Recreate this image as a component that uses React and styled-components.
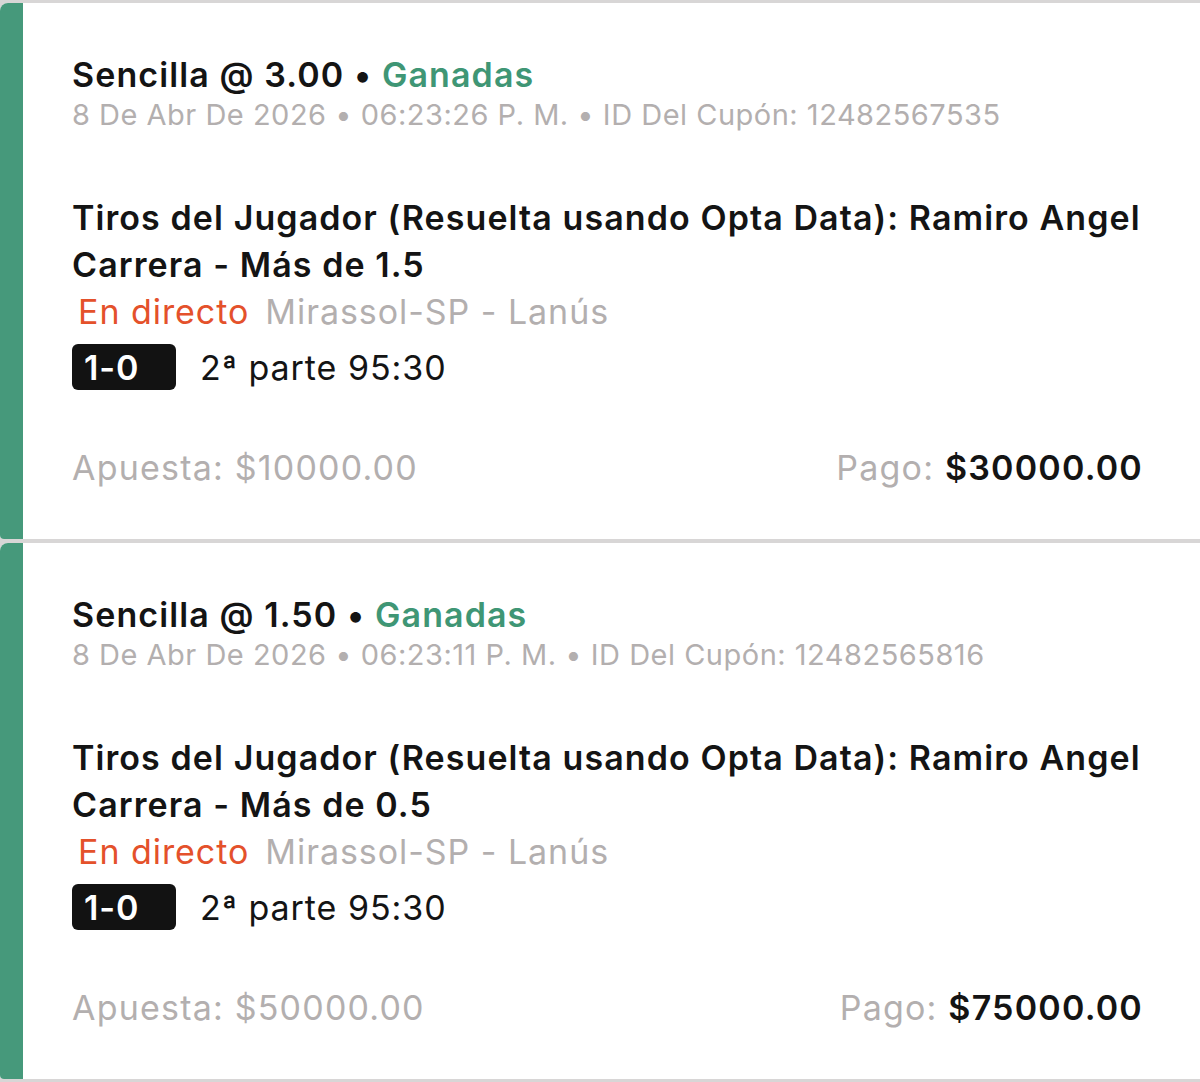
import React from 'react'
import styled, { createGlobalStyle } from 'styled-components'

const GlobalStyle = createGlobalStyle`
  html, body {
    margin: 0;
    padding: 0;
    background: #d8d6d6;
  }
  body {
    font-family: Inter, "Noto Sans", "Liberation Sans", sans-serif;
    -webkit-font-smoothing: antialiased;
  }
`

const Page = styled.div`
  display: flex;
  flex-direction: column;
  gap: 4px;
  padding: 3px 0;
  width: 1200px;
`

const Card = styled.div`
  display: flex;
  height: 536px;
  background: #ffffff;
  border-top-left-radius: 8px;
  border-bottom-left-radius: 4px;
  overflow: hidden;
`

const Bar = styled.div`
  width: 23px;
  flex: none;
  background: #46997b;
`

const Body = styled.div`
  flex: 1;
  display: flex;
  flex-direction: column;
  padding: 52px 59px 0 49px;
`

const Header = styled.div`
  font-size: 34px;
  line-height: 40px;
  font-weight: 600;
  color: #141414;
  letter-spacing: 1.1px;
  white-space: nowrap;
`

const Status = styled.span`
  color: #3f9675;
`

const Meta = styled.div`
  font-size: 29px;
  line-height: 40px;
  color: #b3afaf;
  letter-spacing: 0.5px;
  white-space: nowrap;
`

const Title = styled.div`
  margin: 59px -20px 0 0;
  font-size: 34px;
  line-height: 47px;
  font-weight: 600;
  color: #141414;
  letter-spacing: 1.08px;
`

const LiveRow = styled.div`
  display: flex;
  gap: 16px;
  padding-left: 6px;
  font-size: 34px;
  line-height: 47px;
  color: #b3afaf;
  letter-spacing: 0.95px;
`

const Live = styled.span`
  color: #e4512b;
`

const ScoreRow = styled.div`
  display: flex;
  align-items: center;
  gap: 24px;
  margin-top: 9px;
  font-size: 34px;
  color: #141414;
  letter-spacing: 0.95px;
`

const Score = styled.div`
  width: 104px;
  height: 46px;
  box-sizing: border-box;
  padding-left: 12px;
  display: flex;
  align-items: center;
  background: #121212;
  border-radius: 6px;
  color: #ffffff;
  font-weight: 600;
`

const Footer = styled.div`
  display: flex;
  justify-content: space-between;
  margin: 55px -2px 0 0;
  font-size: 34px;
  line-height: 46px;
  color: #b3afaf;
  letter-spacing: 1.2px;
`

const Amount = styled.span`
  color: #141414;
  font-weight: 600;
`

const bets = [
  {
    odds: '3.00',
    date: '8 De Abr De 2026 • 06:23:26 P. M. • ID Del Cupón: 12482567535',
    market: 'Tiros del Jugador (Resuelta usando Opta Data): Ramiro Angel Carrera - Más de 1.5',
    stake: '$10000.00',
    payout: '$30000.00'
  },
  {
    odds: '1.50',
    date: '8 De Abr De 2026 • 06:23:11 P. M. • ID Del Cupón: 12482565816',
    market: 'Tiros del Jugador (Resuelta usando Opta Data): Ramiro Angel Carrera - Más de 0.5',
    stake: '$50000.00',
    payout: '$75000.00'
  }
]

function BetCard ({ bet }) {
  return (
    <Card>
      <Bar />
      <Body>
        <Header>Sencilla @ {bet.odds} • <Status>Ganadas</Status></Header>
        <Meta>{bet.date}</Meta>
        <Title>{bet.market}</Title>
        <LiveRow>
          <Live>En directo</Live>
          <span>Mirassol-SP - Lanús</span>
        </LiveRow>
        <ScoreRow>
          <Score>1-0</Score>
          <span>2ª parte 95:30</span>
        </ScoreRow>
        <Footer>
          <span>Apuesta: {bet.stake}</span>
          <span>Pago: <Amount>{bet.payout}</Amount></span>
        </Footer>
      </Body>
    </Card>
  )
}

export default function App () {
  return (
    <>
      <GlobalStyle />
      <Page>
        {bets.map(bet => <BetCard key={bet.odds} bet={bet} />)}
      </Page>
    </>
  )
}
